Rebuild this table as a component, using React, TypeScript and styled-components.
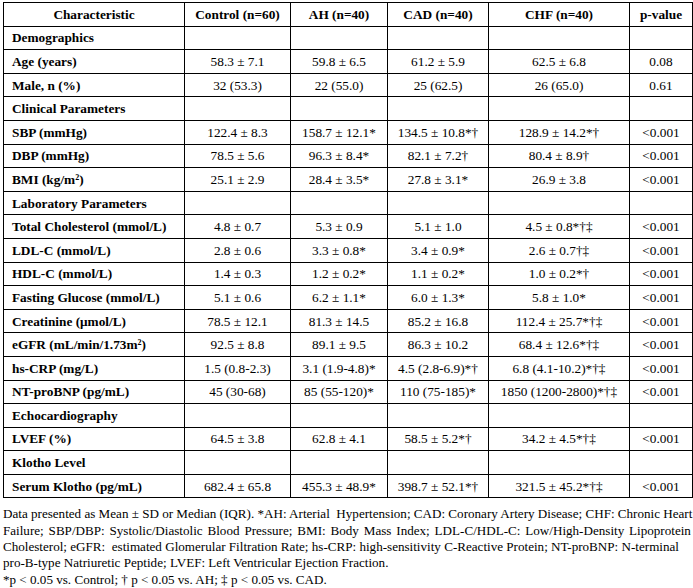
import styled, { createGlobalStyle } from 'styled-components'

const GlobalStyle = createGlobalStyle`
  html, body {
    margin: 0;
    padding: 0;
    background: #ffffff;
  }
  body {
    font-family: "Liberation Serif", "Times New Roman", serif;
    color: #000000;
  }
`

const serif = `"Liberation Serif", "Times New Roman", Times, serif`

type Row = { label: string; values: string[]; p: string }
type Section = { title: string; rows: Row[] }

const columns = ['Control (n=60)', 'AH (n=40)', 'CAD (n=40)', 'CHF (n=40)']
const widths = [181, 106, 97, 101, 141, 63]

const sections: Section[] = [
  {
    title: 'Demographics',
    rows: [
      { label: 'Age (years)', values: ['58.3 ± 7.1', '59.8 ± 6.5', '61.2 ± 5.9', '62.5 ± 6.8'], p: '0.08' },
      { label: 'Male, n (%)', values: ['32 (53.3)', '22 (55.0)', '25 (62.5)', '26 (65.0)'], p: '0.61' },
    ],
  },
  {
    title: 'Clinical Parameters',
    rows: [
      { label: 'SBP (mmHg)', values: ['122.4 ± 8.3', '158.7 ± 12.1*', '134.5 ± 10.8*†', '128.9 ± 14.2*†'], p: '<0.001' },
      { label: 'DBP (mmHg)', values: ['78.5 ± 5.6', '96.3 ± 8.4*', '82.1 ± 7.2†', '80.4 ± 8.9†'], p: '<0.001' },
      { label: 'BMI (kg/m²)', values: ['25.1 ± 2.9', '28.4 ± 3.5*', '27.8 ± 3.1*', '26.9 ± 3.8'], p: '<0.001' },
    ],
  },
  {
    title: 'Laboratory Parameters',
    rows: [
      { label: 'Total Cholesterol (mmol/L)', values: ['4.8 ± 0.7', '5.3 ± 0.9', '5.1 ± 1.0', '4.5 ± 0.8*†‡'], p: '<0.001' },
      { label: 'LDL-C (mmol/L)', values: ['2.8 ± 0.6', '3.3 ± 0.8*', '3.4 ± 0.9*', '2.6 ± 0.7†‡'], p: '<0.001' },
      { label: 'HDL-C (mmol/L)', values: ['1.4 ± 0.3', '1.2 ± 0.2*', '1.1 ± 0.2*', '1.0 ± 0.2*†'], p: '<0.001' },
      { label: 'Fasting Glucose (mmol/L)', values: ['5.1 ± 0.6', '6.2 ± 1.1*', '6.0 ± 1.3*', '5.8 ± 1.0*'], p: '<0.001' },
      { label: 'Creatinine (μmol/L)', values: ['78.5 ± 12.1', '81.3 ± 14.5', '85.2 ± 16.8', '112.4 ± 25.7*†‡'], p: '<0.001' },
      { label: 'eGFR (mL/min/1.73m²)', values: ['92.5 ± 8.8', '89.1 ± 9.5', '86.3 ± 10.2', '68.4 ± 12.6*†‡'], p: '<0.001' },
      { label: 'hs-CRP (mg/L)', values: ['1.5 (0.8-2.3)', '3.1 (1.9-4.8)*', '4.5 (2.8-6.9)*†', '6.8 (4.1-10.2)*†‡'], p: '<0.001' },
      { label: 'NT-proBNP (pg/mL)', values: ['45 (30-68)', '85 (55-120)*', '110 (75-185)*', '1850 (1200-2800)*†‡'], p: '<0.001' },
    ],
  },
  {
    title: 'Echocardiography',
    rows: [
      { label: 'LVEF (%)', values: ['64.5 ± 3.8', '62.8 ± 4.1', '58.5 ± 5.2*†', '34.2 ± 4.5*†‡'], p: '<0.001' },
    ],
  },
  {
    title: 'Klotho Level',
    rows: [
      { label: 'Serum Klotho (pg/mL)', values: ['682.4 ± 65.8', '455.3 ± 48.9*', '398.7 ± 52.1*†', '321.5 ± 45.2*†‡'], p: '<0.001' },
    ],
  },
]

// footnote lines, broken where the source breaks them
const noteLines: { text: string; spacing?: number }[] = [
  { text: 'Data presented as Mean ± SD or Median (IQR). *AH: Arterial\u00a0 Hypertension; CAD: Coronary Artery Disease; CHF: Chronic Heart' },
  { text: 'Failure; SBP/DBP: Systolic/Diastolic Blood Pressure; BMI: Body Mass Index; LDL-C/HDL-C: Low/High-Density Lipoprotein', spacing: 1.6 },
  { text: 'Cholesterol; eGFR:\u00a0 estimated Glomerular Filtration Rate; hs-CRP: high-sensitivity C-Reactive Protein; NT-proBNP: N-terminal' },
  { text: 'pro-B-type Natriuretic Peptide; LVEF: Left Ventricular Ejection Fraction.' },
  { text: '*p < 0.05 vs. Control; † p < 0.05 vs. AH; ‡ p < 0.05 vs. CAD.' },
]

const App = () => {
  return (
    <>
      <GlobalStyle />
      <Page>
        <DataTable>
          <colgroup>
            {widths.map((w, i) => (
              <col key={i} style={{ width: w }} />
            ))}
          </colgroup>
          <thead>
            <tr>
              <HeadCell>Characteristic</HeadCell>
              {columns.map((c) => (
                <HeadCell key={c}>{c}</HeadCell>
              ))}
              <HeadCell>p-value</HeadCell>
            </tr>
          </thead>
          <tbody>
            {sections.map((s) => (
              <SectionRows key={s.title} section={s} />
            ))}
          </tbody>
        </DataTable>
        <Note>
          {noteLines.map((l, i) => (
            <NoteLine key={i} $spacing={l.spacing ?? 0}>
              {l.text}
            </NoteLine>
          ))}
        </Note>
      </Page>
    </>
  )
}

const SectionRows = ({ section }: { section: Section }) => {
  return (
    <>
      <tr>
        <LabelCell>{section.title}</LabelCell>
        {[0, 1, 2, 3, 4].map((i) => (
          <ValueCell key={i} />
        ))}
      </tr>
      {section.rows.map((r) => (
        <tr key={r.label}>
          <LabelCell>{r.label}</LabelCell>
          {r.values.map((v, i) => (
            <ValueCell key={i}>{v}</ValueCell>
          ))}
          <ValueCell>{r.p}</ValueCell>
        </tr>
      ))}
    </>
  )
}

const Page = styled.div`
  padding: 2px 0 0 3px;
  width: 690px;
  font-family: ${serif};
`

const DataTable = styled.table`
  border-collapse: collapse;
  table-layout: fixed;
  width: 689px;
  font-family: ${serif};
  font-size: 13.3px;
  line-height: 15px;
  color: #000;

  tr {
    height: 23.6px;
  }
`

const HeadCell = styled.th`
  border: 1px solid #000;
  padding: 0 4px;
  font-family: ${serif};
  font-weight: bold;
  text-align: center;
  vertical-align: middle;
  white-space: nowrap;
`

const LabelCell = styled.td`
  border: 1px solid #000;
  padding: 0 6px 0 8px;
  font-family: ${serif};
  font-weight: bold;
  text-align: left;
  vertical-align: middle;
  white-space: nowrap;
`

const ValueCell = styled.td`
  border: 1px solid #000;
  padding: 0 2px;
  font-family: ${serif};
  text-align: center;
  vertical-align: middle;
  white-space: nowrap;
`

const Note = styled.div`
  margin: 8px 0 0 0;
  font-family: ${serif};
  font-size: 13.1px;
  line-height: 16.3px;
  color: #000;
`

const NoteLine = styled.div<{ $spacing: number }>`
  white-space: pre;
  word-spacing: ${(p) => p.$spacing}px;
`

export default App
